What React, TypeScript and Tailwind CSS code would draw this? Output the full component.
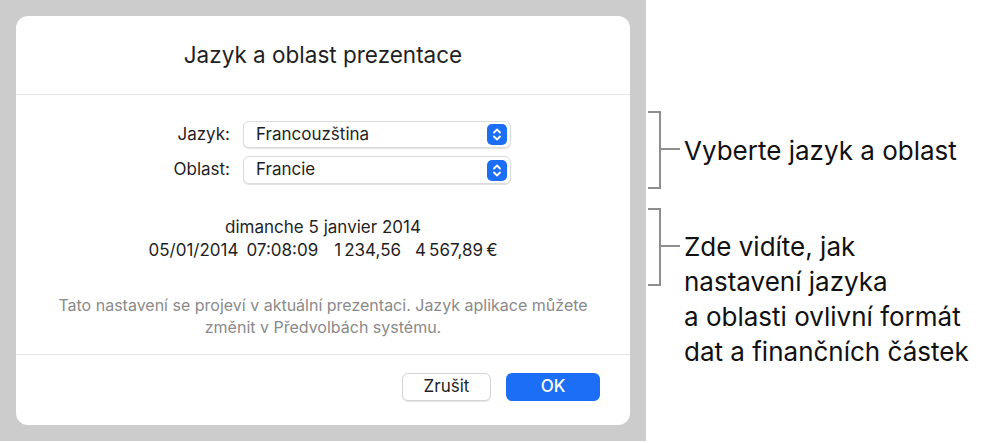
import React from 'react';

const Stepper: React.FC = () => (
  <div className="flex h-[21px] w-[20px] items-center justify-center rounded-[5px] bg-[#1b6ef5]">
    <svg width="10" height="15" viewBox="0 0 10 15" fill="none" stroke="white" strokeWidth="1.8" strokeLinecap="round" strokeLinejoin="round">
      <path d="M2 5.5 L5 2.5 L8 5.5" />
      <path d="M2 9.5 L5 12.5 L8 9.5" />
    </svg>
  </div>
);

const Select: React.FC<{ value: string; tall?: boolean }> = ({ value, tall }) => (
  <div
    className={`flex w-[268px] items-center justify-between rounded-[6px] border border-[#dcdcdc] bg-white pl-3 pr-[3px] shadow-[0_1px_1px_rgba(0,0,0,0.12)] ${
      tall ? 'h-[28px]' : 'h-[27px]'
    }`}
  >
    <span className="text-[17px] text-[#1f1f1f]">{value}</span>
    <Stepper />
  </div>
);

const Bracket: React.FC = () => (
  <svg width="32" height="78" viewBox="0 0 32 78" fill="none" stroke="#8e8e8e" strokeWidth="2" className="shrink-0">
    <path d="M0 1 H12 V77 H0" />
    <path d="M12 38 H32" />
  </svg>
);

const App: React.FC = () => {
  return (
    <div className="flex h-[443px] w-[988px] bg-white font-['Inter',sans-serif]">
      {/* Grey backdrop with the dialog */}
      <div className="h-[441px] w-[646px] shrink-0 bg-[#cccccc] p-4">
        <div className="flex h-full flex-col rounded-[12px] bg-white">
          <div className="flex h-[79px] items-center justify-center border-b border-[#e4e4e4]">
            <h1 className="text-[22.5px] text-[#1f1f1f]">Jazyk a oblast prezentace</h1>
          </div>

          <div className="flex flex-col gap-2 pt-[26px]">
            <div className="flex items-center gap-[13px]">
              <span className="w-[214px] text-right text-[17px] text-[#1f1f1f]">Jazyk:</span>
              <Select value="Francouzština" />
            </div>
            <div className="flex items-center gap-[13px]">
              <span className="w-[214px] text-right text-[17px] text-[#1f1f1f]">Oblast:</span>
              <Select value="Francie" tall />
            </div>
          </div>

          <div className="mt-[32px] flex flex-col items-center text-[17px] leading-[23px] text-[#1f1f1f]">
            <span>dimanche 5 janvier 2014</span>
            <div className="flex">
              <span>05/01/2014</span>
              <span className="ml-2">07:08:09</span>
              <span className="ml-4">1{'\u202F'}234,56</span>
              <span className="ml-[14px]">4{'\u202F'}567,89{'\u202F'}€</span>
            </div>
          </div>

          <p className="mt-[32px] text-center text-[16px] leading-[22px] text-[#8a8a8a]">
            Tato nastavení se projeví v aktuální prezentaci. Jazyk aplikace můžete
            <br />
            změnit v Předvolbách systému.
          </p>

          <div className="mt-[16px] flex justify-end gap-[15px] border-t border-[#e4e4e4] pr-[30px] pt-[18px]">
            <button className="h-[28px] w-[89px] rounded-[6px] border border-[#d4d4d4] bg-white text-[17px] text-[#1f1f1f] shadow-[0_1px_1px_rgba(0,0,0,0.1)]">
              Zrušit
            </button>
            <button className="h-[28px] w-[94px] rounded-[6px] bg-[#1b6ef5] text-[17px] font-medium text-white">
              OK
            </button>
          </div>
        </div>
      </div>

      {/* Callouts */}
      <div className="flex flex-col gap-[19px] pl-[2px] pt-[111px] text-[26px] leading-[35px] text-[#111111]">
        <div className="flex items-center">
          <Bracket />
          <span className="ml-[4px]">Vyberte jazyk a oblast</span>
        </div>
        <div className="flex items-start">
          <Bracket />
          <p className="ml-[4px] mt-[21px]">
            Zde vidíte, jak
            <br />
            nastavení jazyka
            <br />
            a oblasti ovlivní formát
            <br />
            dat a finančních částek
          </p>
        </div>
      </div>
    </div>
  );
};

export default App;
